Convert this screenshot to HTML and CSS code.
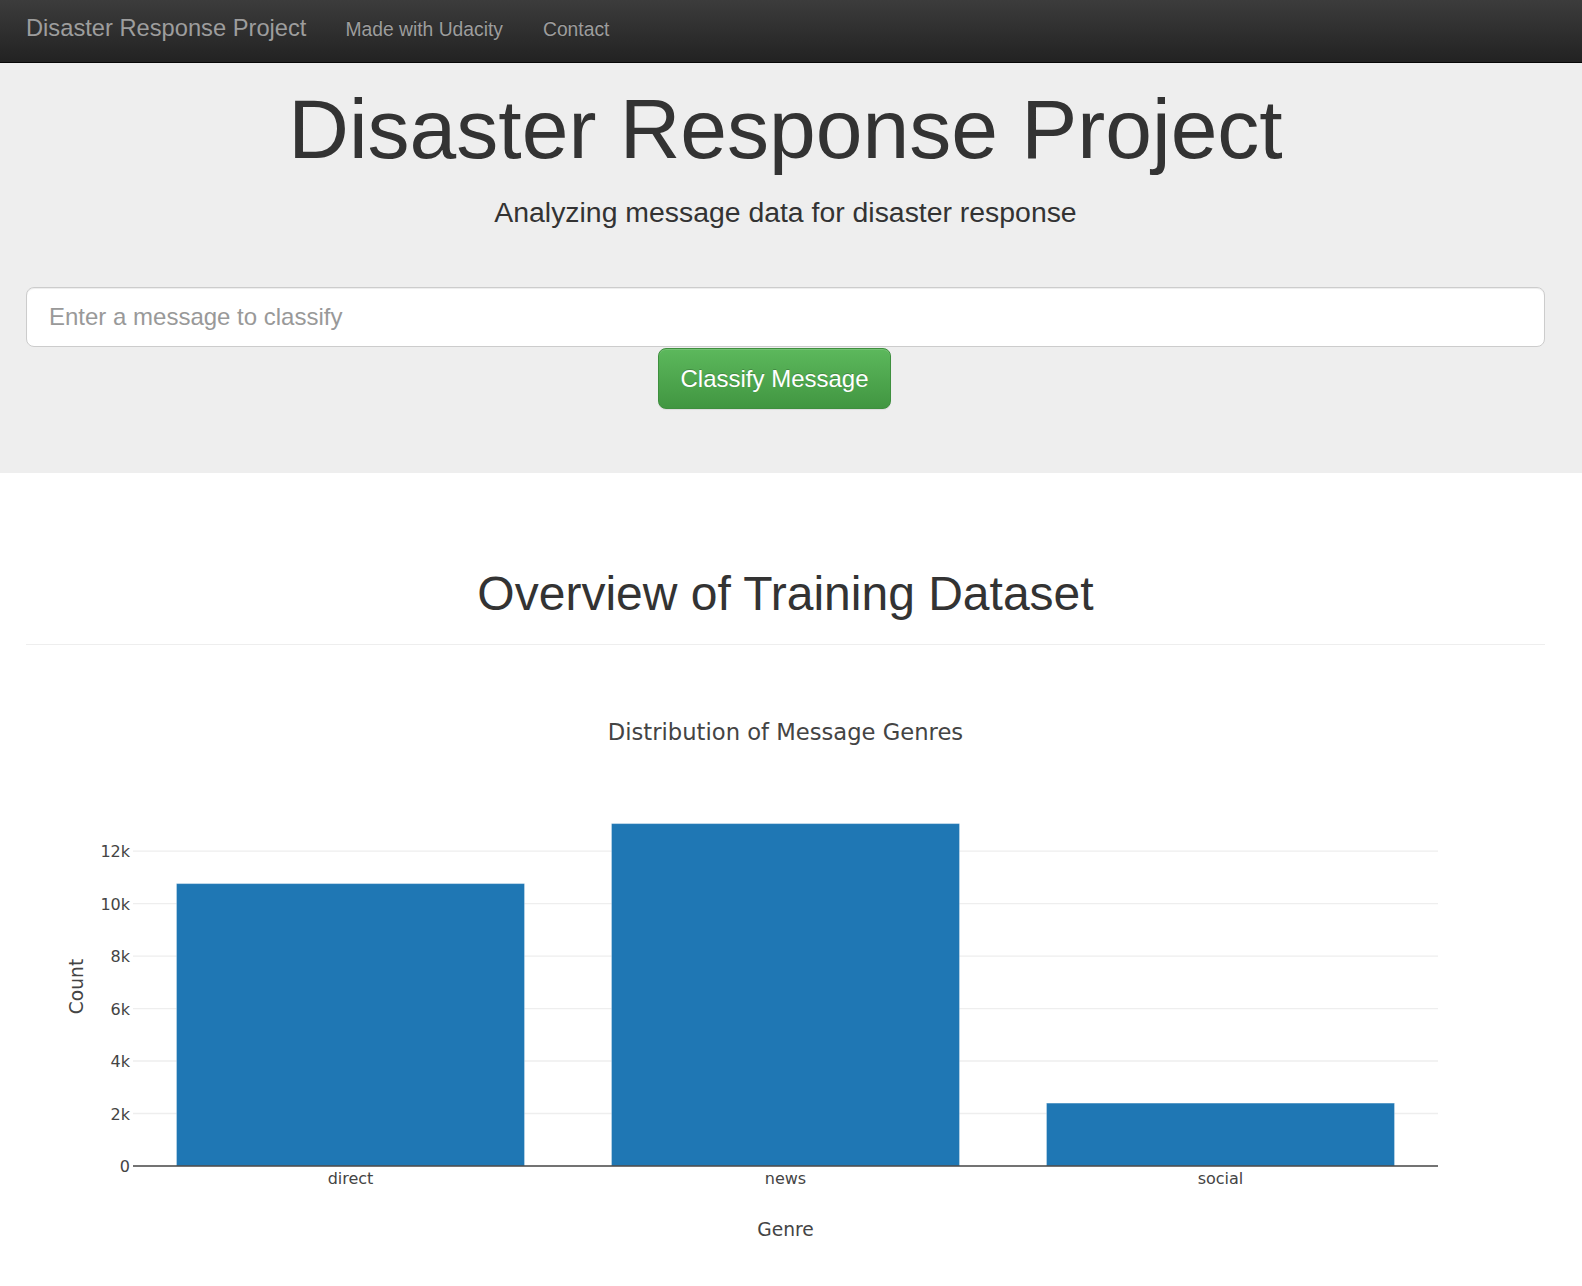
FILE: index.html
```html
<!DOCTYPE html>
<html lang="en">
  <head>
    <meta charset="UTF-8" />
    <meta name="viewport" content="width=device-width, initial-scale=1.0" />
    <title>Disaster Response Project</title>
    <link rel="stylesheet" href="styles.css">
  </head>
  <body>
    <nav class="navbar">
      <a class="navbar-brand" href="#">Disaster Response Project</a>
      <ul class="nav">
        <li><a href="#">Made with Udacity</a></li>
        <li><a href="#">Contact</a></li>
      </ul>
    </nav>

    <div class="jumbotron">
      <div class="container">
        <h1>Disaster Response Project</h1>
        <p class="lead">Analyzing message data for disaster response</p>

        <form class="classify-form" onsubmit="return false;">
          <input type="text" class="form-control" name="query" placeholder="Enter a message to classify" />
          <div class="form-actions">
            <button type="submit" class="btn-success">Classify Message</button>
          </div>
        </form>
      </div>
    </div>

    <div class="container">
      <div class="page-header">
        <h1>Overview of Training Dataset</h1>
      </div>

      <!-- genre counts: direct 10766, news 13054, social 2396 -->
      <svg class="chart" viewBox="0 0 1519 600" width="1519" height="600">
        <text class="chart-title" x="759.5" y="66">Distribution of Message Genres</text>

        <g class="grid">
          <line x1="107" x2="1412" y1="439.5" y2="439.5" />
          <line x1="107" x2="1412" y1="387" y2="387" />
          <line x1="107" x2="1412" y1="334.6" y2="334.6" />
          <line x1="107" x2="1412" y1="282.1" y2="282.1" />
          <line x1="107" x2="1412" y1="229.7" y2="229.7" />
          <line x1="107" x2="1412" y1="177.2" y2="177.2" />
        </g>

        <g class="bars">
          <rect x="150.5" y="209.6" width="348" height="282.4" />
          <rect x="585.5" y="149.6" width="348" height="342.4" />
          <rect x="1020.5" y="429.1" width="348" height="62.9" />
        </g>

        <line class="zero-line" x1="107" x2="1412" y1="492" y2="492" />

        <g class="ytick">
          <text x="104" y="498">0</text>
          <text x="104" y="445.5">2k</text>
          <text x="104" y="393">4k</text>
          <text x="104" y="340.6">6k</text>
          <text x="104" y="288.1">8k</text>
          <text x="104" y="235.7">10k</text>
          <text x="104" y="183.2">12k</text>
        </g>

        <g class="xtick">
          <text x="324.5" y="509.7">direct</text>
          <text x="759.5" y="509.7">news</text>
          <text x="1194.5" y="509.7">social</text>
        </g>

        <text class="axis-title" x="759.5" y="562">Genre</text>
        <text class="axis-title" x="57" y="312.5" transform="rotate(-90 57 312.5)">Count</text>
      </svg>
    </div>
  </body>
</html>
```

FILE: styles.css
```css
/* base */
body {
  font-family: "Liberation Sans", Arial, Helvetica, sans-serif;
  color: #333333;
  background-color: #ffffff;
  margin: 0;
}

a {
  text-decoration: none;
}

.container {
  padding: 0 37px 0 26px;
}

/* top bar */
.navbar {
  display: flex;
  align-items: baseline;
  box-sizing: border-box;
  height: 63px;
  padding: 14px 0 0 26px;
  background-image: linear-gradient(to bottom, #3c3c3c 0%, #222222 100%);
  border-bottom: 1px solid #080808;
}

.navbar-brand {
  font-size: 23.7px;
  line-height: 28px;
  color: #9d9d9d;
  margin-right: 19px;
}

.nav {
  display: flex;
  list-style: none;
  margin: 0;
  padding: 0;
}

.nav a {
  display: block;
  padding: 0 20px;
  font-size: 19.3px;
  line-height: 28px;
  color: #9d9d9d;
  text-shadow: 0 -1px 0 rgba(0, 0, 0, 0.25);
}

/* header block */
.jumbotron {
  background-color: #eeeeee;
  padding: 20px 0 64px;
}

.jumbotron h1 {
  font-size: 84px;
  font-weight: 500;
  line-height: 1.1;
  text-align: center;
  margin: 0 0 17px;
}

.lead {
  font-size: 28.4px;
  line-height: 40px;
  text-align: center;
  margin: 0 0 55px;
}

.form-control {
  display: block;
  width: 100%;
  height: 60px;
  box-sizing: border-box;
  padding: 0 22px;
  font-family: inherit;
  font-size: 24px;
  color: #555555;
  background-color: #ffffff;
  border: 1px solid #cccccc;
  border-radius: 8px;
  box-shadow: inset 0 1px 1px rgba(0, 0, 0, 0.075);
  outline: none;
}

.form-control::placeholder {
  color: #999999;
}

.form-actions {
  display: flex;
  justify-content: center;
  padding-right: 22px;
  margin-top: 1px;
}

.btn-success {
  height: 61px;
  padding: 0 21px;
  font-family: inherit;
  font-size: 24px;
  color: #ffffff;
  text-shadow: 0 -1px 0 rgba(0, 0, 0, 0.2);
  background-image: linear-gradient(to bottom, #5cb85c 0%, #419641 100%);
  border: 1px solid #3e8f3e;
  border-radius: 8px;
  box-shadow: inset 0 1px 0 rgba(255, 255, 255, 0.15), 0 1px 1px rgba(0, 0, 0, 0.075);
  cursor: pointer;
}

/* dataset overview */
.page-header {
  margin: 95px 0 28.5px;
  border-bottom: 1px solid #eeeeee;
}

.page-header h1 {
  font-size: 48px;
  font-weight: 500;
  line-height: 1.1;
  text-align: center;
  margin: 0;
  padding-bottom: 23px;
}

.chart {
  display: block;
  width: 100%;
  height: auto;
}

.chart text {
  font-family: "DejaVu Sans", Verdana, sans-serif;
  fill: #444444;
}

.chart-title {
  font-size: 22.67px;
  text-anchor: middle;
}

.grid line {
  stroke: #eeeeee;
  stroke-width: 1.33;
}

.bars rect {
  fill: #1f77b4;
  stroke: rgba(255, 255, 255, 0.3);
  stroke-width: 1;
}

.zero-line {
  stroke: #444444;
  stroke-width: 1.33;
}

.ytick text {
  font-size: 16px;
  text-anchor: end;
}

.xtick text {
  font-size: 16px;
  text-anchor: middle;
}

.axis-title {
  font-size: 18.67px;
  text-anchor: middle;
}
```
